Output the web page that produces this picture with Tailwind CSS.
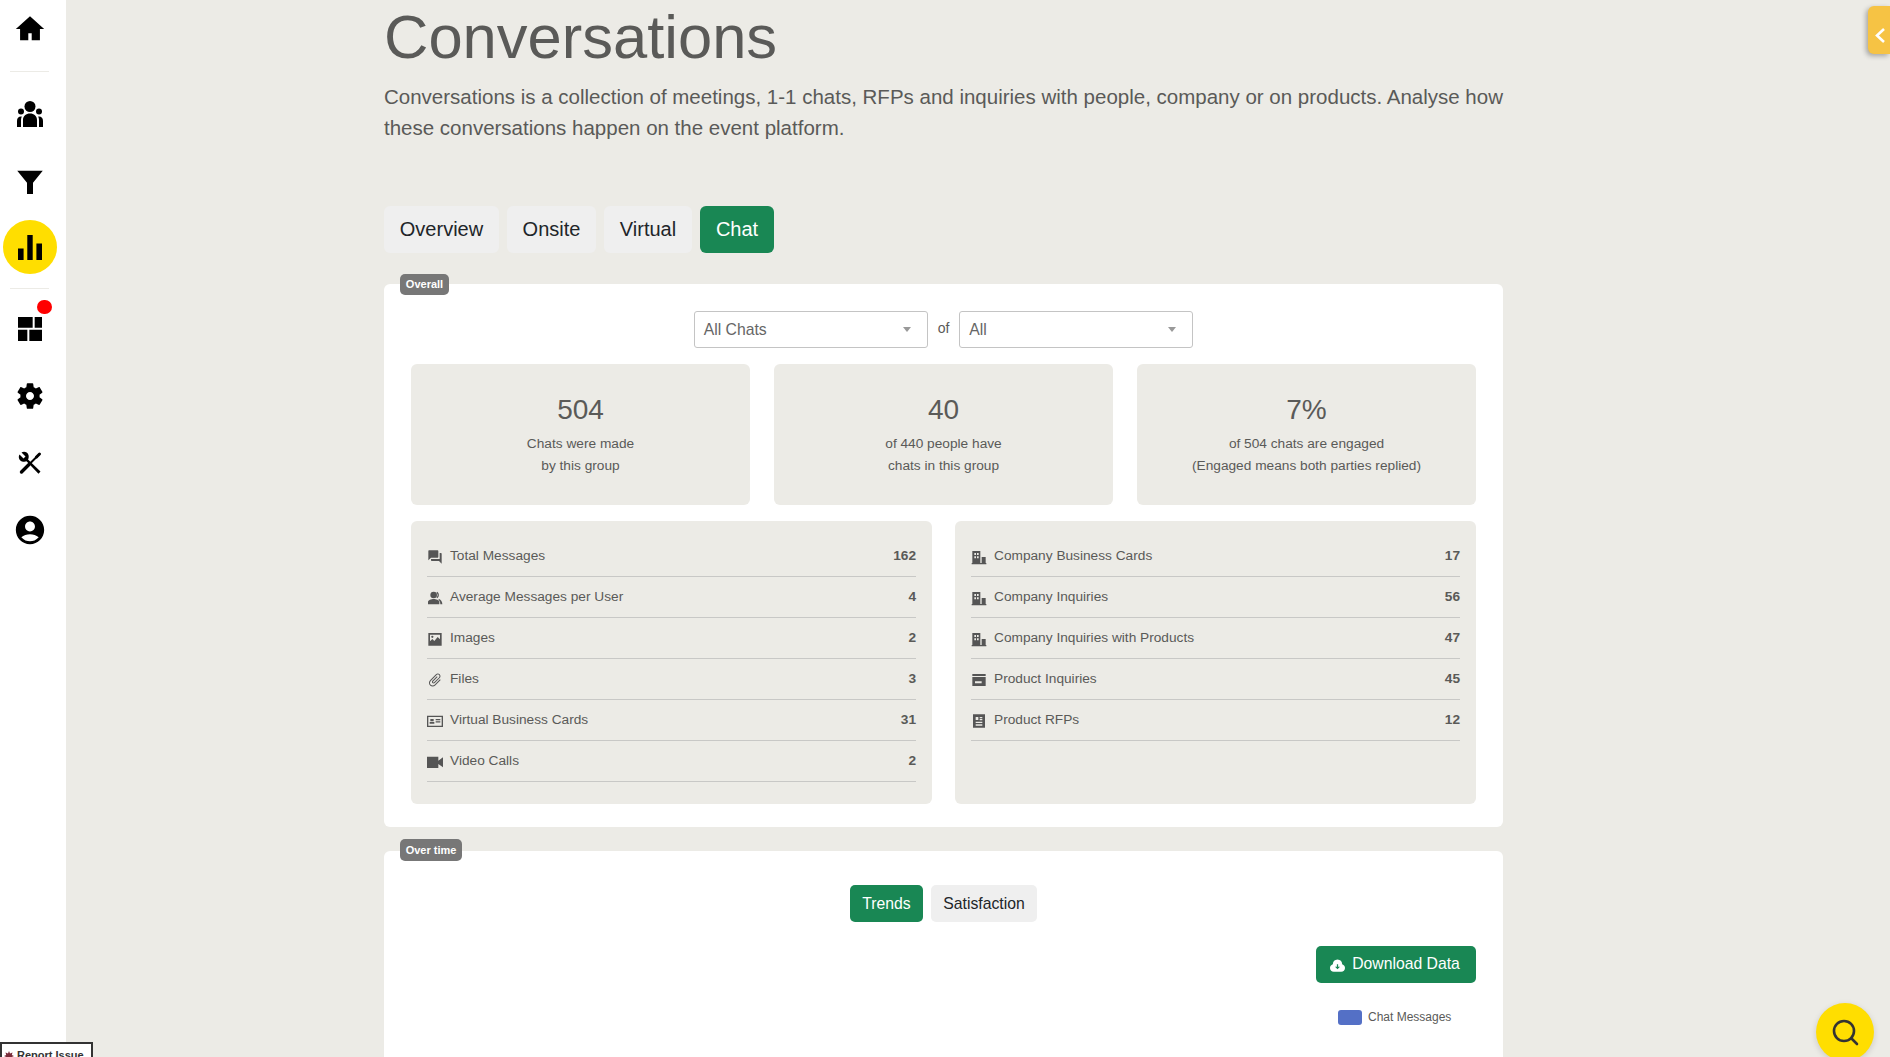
<!DOCTYPE html>
<html lang="en">
<head>
  <meta charset="UTF-8"/>
  <title>Conversations</title>
  <script src="https://cdn.jsdelivr.net/npm/@tailwindcss/browser@4"></script>
</head>
<body class="h-screen overflow-hidden bg-[#ecebe6] font-['Liberation_Sans',Arial,sans-serif] text-[#5a5a58]">
  <div class="relative flex h-[1057px] overflow-hidden">

    <!-- Sidebar -->
    <nav class="w-[66px] shrink-0 bg-white pr-[7px] flex flex-col items-center text-black">
      <div class="h-[72px] w-[39px] shrink-0 border-b border-[#ecebe6] pb-[13px] flex items-center justify-center">
        <svg viewBox="0 0 24 24" class="w-[34px] h-[34px]" fill="currentColor"><path d="M10.800 20v-5h2.400v5H19v-8h3L12 3 2 12h3v8z"/></svg>
      </div>
      <div class="h-[84px] shrink-0 flex items-center justify-center">
        <svg viewBox="0 0 28 28" class="w-[28px] h-[28px]" fill="currentColor"><circle cx="14" cy="6.500" r="5.500"/><circle cx="5" cy="11.500" r="3"/><circle cx="23" cy="11.500" r="3"/><path d="M7 27v-7c0-4 3-6.500 7-6.500s7 2.500 7 6.500v7zM1 27v-6c0-3 1.500-4.500 4-4.500.5 0 .8 0 .8.100-.5 1-.8 2.200-.8 3.400v7zM27 27v-6c0-3-1.500-4.500-4-4.500-.5 0-.8 0-.8.100.5 1 .8 2.200.8 3.400v7z"/></svg>
      </div>
      <div class="h-[52px] shrink-0 flex items-center justify-center">
        <svg viewBox="0 0 24 24" class="w-[36px] h-[36px]" fill="currentColor"><path d="M3.500 4.500h17L14 12.500v7.500h-4v-7.500z"/></svg>
      </div>
      <div class="w-[54px] h-[54px] shrink-0 mt-[12px] rounded-full bg-[#ffde00] flex items-center justify-center">
        <svg viewBox="0 0 24 25" class="w-[24px] h-[25px]" fill="currentColor"><path d="M0 13.600h5.600V25H0zM9.300 0h5.400v25H9.300zM18.400 8.600H24V25h-5.600z"/></svg>
      </div>
      <div class="w-[39px] shrink-0 mt-[14px] border-b border-[#ecebe6]"></div>
      <div class="relative h-[80px] w-full shrink-0 flex items-center justify-center">
        <svg viewBox="0 0 24 24" class="w-[32px] h-[32px]" fill="currentColor"><path d="M3 3h11v8H3zM15.500 3H21v8h-5.500zM3 12.500h7V21H3zM11.500 12.500H21V21h-9.500z"/></svg>
        <span class="absolute left-[37px] top-[11px] w-[15px] h-[14px] rounded-full bg-[#ff0000]"></span>
      </div>
      <div class="h-[54px] shrink-0 flex items-center justify-center">
        <svg viewBox="0 0 24 24" class="w-[32px] h-[32px]" fill="currentColor"><path fill-rule="evenodd" d="M19.140 12.940c.04-.3.06-.61.06-.94 0-.32-.02-.64-.07-.94l2.030-1.580c.18-.14.23-.41.12-.61l-1.920-3.320c-.12-.22-.37-.29-.59-.22l-2.390.96c-.5-.38-1.030-.7-1.620-.94l-.36-2.540c-.04-.24-.24-.41-.48-.41h-3.840c-.24 0-.43.17-.47.41l-.36 2.540c-.59.24-1.130.57-1.620.94l-2.390-.96c-.22-.08-.47 0-.59.22L2.740 8.870c-.12.21-.08.47.12.61l2.030 1.580c-.05.3-.09.63-.09.94s.02.64.07.94l-2.030 1.580c-.18.14-.23.41-.12.61l1.920 3.320c.12.22.37.29.59.22l2.390-.96c.5.38 1.030.7 1.620.94l.36 2.540c.05.24.24.41.48.41h3.840c.24 0 .44-.17.47-.41l.36-2.540c.59-.24 1.130-.56 1.620-.94l2.390.96c.22.08.47 0 .59-.22l1.920-3.320c.12-.22.07-.47-.12-.61l-2.010-1.580zM12 15c-1.650 0-3-1.350-3-3s1.350-3 3-3 3 1.350 3 3-1.350 3-3 3z"/></svg>
      </div>
      <div class="h-[80px] shrink-0 flex items-center justify-center">
        <svg viewBox="0 0 24 24" class="w-[24px] h-[24px]" fill="currentColor"><path d="M1.500 3.500 5.500 7.500 7.500 5.500 3.500 1.500C6 0 9.500 1 10.500 4c.5 2 0 3.500-.5 4.500L22.500 20.500 20.500 22.700 8.500 10.300C7.500 10.800 6 11 4 10.500 1 9.500 0 6 1.500 3.500z"/><path d="M3.500 21 11 13.500" stroke="currentColor" stroke-width="3.400" stroke-linecap="round"/><path d="M11 13.500 19 5.500" stroke="currentColor" stroke-width="2"/><path d="M18.500 6 21.500 3" stroke="currentColor" stroke-width="3" stroke-linecap="round"/></svg>
      </div>
      <div class="h-[54px] shrink-0 flex items-center justify-center">
        <svg viewBox="0 0 24 24" class="w-[34px] h-[34px]" fill="currentColor"><path d="M12 2C6.480 2 2 6.480 2 12s4.480 10 10 10 10-4.480 10-10S17.520 2 12 2zm0 4c1.930 0 3.500 1.570 3.500 3.500S13.930 13 12 13s-3.500-1.570-3.500-3.500S10.070 6 12 6zm0 14c-2.030 0-4.430-.82-6.140-2.880C7.550 15.800 9.680 15 12 15s4.450.8 6.140 2.120C16.430 19.180 14.030 20 12 20z"/></svg>
      </div>
    </nav>

    <!-- Main column -->
    <main class="flex-1 pl-[318px]">
      <div class="w-[1119px]">
        <h1 class="pt-[3px] text-[61.500px] leading-[67px] font-normal">Conversations</h1>
        <p class="mt-[11px] text-[20.500px] leading-[31px] whitespace-nowrap">Conversations is a collection of meetings, 1-1 chats, RFPs and inquiries with people, company or on products. Analyse how<br/>these conversations happen on the event platform.</p>

        <div class="mt-[63px] flex gap-[8px] text-[20px] text-[#212529]">
          <a class="h-[47px] w-[115px] pb-[2px] rounded-[6px] bg-[#efefef] flex items-center justify-center">Overview</a>
          <a class="h-[47px] w-[89px] pb-[2px] rounded-[6px] bg-[#efefef] flex items-center justify-center">Onsite</a>
          <a class="h-[47px] w-[88px] pb-[2px] rounded-[6px] bg-[#efefef] flex items-center justify-center">Virtual</a>
          <a class="h-[47px] w-[74px] pb-[2px] rounded-[6px] bg-[#198754] text-white flex items-center justify-center">Chat</a>
        </div>

        <!-- Overall -->
        <section class="relative mt-[31px] h-[543px] rounded-[6px] bg-white px-[27px] pt-[27px]">
          <span class="absolute left-[16px] -top-[10px] h-[21px] w-[49px] rounded-[5px] bg-[#777777] text-white text-[11px] font-bold flex items-center justify-center">Overall</span>

          <div class="flex justify-center items-center gap-[10px]">
            <div class="w-[234px] h-[37px] pt-[1px] rounded-[3px] border border-[#c4c4c4] bg-white px-[9px] flex items-center justify-between text-[15.750px] text-[#666666]">
              <span>All Chats</span>
              <svg viewBox="0 0 8 5" class="w-[8px] h-[5px] mr-[7px] -mt-[2px]" fill="#999999"><path d="M0 0h8L4 5z"/></svg>
            </div>
            <span class="text-[14px] -mt-[3px]">of</span>
            <div class="w-[234px] h-[37px] pt-[1px] rounded-[3px] border border-[#c4c4c4] bg-white px-[9px] flex items-center justify-between text-[15.750px] text-[#666666]">
              <span>All</span>
              <svg viewBox="0 0 8 5" class="w-[8px] h-[5px] mr-[7px] -mt-[2px]" fill="#999999"><path d="M0 0h8L4 5z"/></svg>
            </div>
          </div>

          <div class="mt-[16px] grid grid-cols-3 gap-[24px] text-center">
            <div class="h-[141px] rounded-[6px] bg-[#ecebe6] pt-[25px]">
              <div class="text-[28px] leading-[42px]">504</div>
              <div class="mt-[2px] text-[13.700px] leading-[21.500px]">Chats were made<br/>by this group</div>
            </div>
            <div class="h-[141px] rounded-[6px] bg-[#ecebe6] pt-[25px]">
              <div class="text-[28px] leading-[42px]">40</div>
              <div class="mt-[2px] text-[13.700px] leading-[21.500px]">of 440 people have<br/>chats in this group</div>
            </div>
            <div class="h-[141px] rounded-[6px] bg-[#ecebe6] pt-[25px]">
              <div class="text-[28px] leading-[42px]">7%</div>
              <div class="mt-[2px] text-[13.700px] leading-[21.500px]">of 504 chats are engaged<br/>(Engaged means both parties replied)</div>
            </div>
          </div>

          <div class="mt-[16px] grid grid-cols-2 gap-[23px] text-[13.700px]">
            <div class="h-[283px] rounded-[6px] bg-[#ecebe6] px-[16px] pt-[15px]">
              <div class="h-[41px] border-b border-[#c8c8c6] flex items-center">
                <svg viewBox="0 0 24 24" class="w-[16px] h-[16px] mt-[2px]" fill="#555555"><path d="M21 6h-2v9H6v2c0 .55.45 1 1 1h11l4 4V7c0-.55-.45-1-1-1zm-4 6V3c0-.55-.45-1-1-1H3c-.55 0-1 .45-1 1v14l4-4h10c.55 0 1-.45 1-1z"/></svg>
                <span class="ml-[7px]">Total Messages</span><b class="ml-auto">162</b>
              </div>
              <div class="h-[41px] border-b border-[#c8c8c6] flex items-center">
                <svg viewBox="0 0 24 24" class="w-[16px] h-[16px] mt-[2px]" fill="#555555"><path d="M10 12.500a5 5 0 1 0 0-10 5 5 0 0 0 0 10zM10 13.500c-3.500 0-8.500 1.700-8.500 4.500v3.500h17V18c0-2.800-5-4.500-8.500-4.500zM15.500 2.500l-1.200 1.500a5 5 0 0 1 0 7l1.200 1.500a6.500 6.500 0 0 0 0-10zM18 13.500l-1 1.500c1.800 1 3 2.800 3 6.500h3c0-4-2-6.800-5-8z"/></svg>
                <span class="ml-[7px]">Average Messages per User</span><b class="ml-auto">4</b>
              </div>
              <div class="h-[41px] border-b border-[#c8c8c6] flex items-center">
                <svg viewBox="0 0 24 24" class="w-[16px] h-[16px] mt-[2px]" fill="#555555"><path fill-rule="evenodd" d="M2 3h20v19H2zM4.500 5.500v10l3.500-3.500 3 3 5-6 3.500 3.500v-7zM8 7a1.700 1.700 0 1 0 0 3.400A1.700 1.700 0 0 0 8 7z"/></svg>
                <span class="ml-[7px]">Images</span><b class="ml-auto">2</b>
              </div>
              <div class="h-[41px] border-b border-[#c8c8c6] flex items-center">
                <svg viewBox="0 0 24 24" class="w-[16px] h-[16px] mt-[2px] rotate-45" fill="#555555"><path d="M16.500 6v11.500c0 2.210-1.790 4-4 4s-4-1.790-4-4V5c0-1.380 1.120-2.500 2.500-2.500s2.500 1.120 2.500 2.500v10.500c0 .55-.45 1-1 1s-1-.45-1-1V6H10v9.500c0 1.380 1.120 2.500 2.500 2.500s2.500-1.120 2.500-2.500V5c0-2.210-1.790-4-4-4S7 2.790 7 5v12.500c0 3.040 2.460 5.500 5.500 5.500s5.500-2.460 5.500-5.500V6h-1.500z"/></svg>
                <span class="ml-[7px]">Files</span><b class="ml-auto">3</b>
              </div>
              <div class="h-[41px] border-b border-[#c8c8c6] flex items-center">
                <svg viewBox="0 0 24 24" class="w-[16px] h-[16px] mt-[2px]" fill="#555555"><path fill-rule="evenodd" d="M0 4h24v17H0zM2 6v13h20V6zM5 9h5v3.500H5zM4 13.500h7V16H4zM13 9h7v1.800h-7zM13 12.500h7v1.800h-7z"/></svg>
                <span class="ml-[7px]">Virtual Business Cards</span><b class="ml-auto">31</b>
              </div>
              <div class="h-[41px] border-b border-[#c8c8c6] flex items-center">
                <svg viewBox="0 0 24 24" class="w-[16px] h-[16px] mt-[2px]" fill="#555555"><path d="M17 10V4H0v17h17v-6l7 5V5z"/></svg>
                <span class="ml-[7px]">Video Calls</span><b class="ml-auto">2</b>
              </div>
            </div>

            <div class="h-[283px] rounded-[6px] bg-[#ecebe6] px-[16px] pt-[15px]">
              <div class="h-[41px] border-b border-[#c8c8c6] flex items-center">
                <svg viewBox="0 0 24 24" class="w-[16px] h-[16px] mt-[2px]" fill="#555555"><path fill-rule="evenodd" d="M2 21V3h12v18h2v-9h6v9h1v2H1v-2zM5 6v3h2.500V6zM9 6v3h2.500V6zM5 11v3h2.500v-3zM9 11v3h2.500v-3z"/></svg>
                <span class="ml-[7px]">Company Business Cards</span><b class="ml-auto">17</b>
              </div>
              <div class="h-[41px] border-b border-[#c8c8c6] flex items-center">
                <svg viewBox="0 0 24 24" class="w-[16px] h-[16px] mt-[2px]" fill="#555555"><path fill-rule="evenodd" d="M2 21V3h12v18h2v-9h6v9h1v2H1v-2zM5 6v3h2.500V6zM9 6v3h2.500V6zM5 11v3h2.500v-3zM9 11v3h2.500v-3z"/></svg>
                <span class="ml-[7px]">Company Inquiries</span><b class="ml-auto">56</b>
              </div>
              <div class="h-[41px] border-b border-[#c8c8c6] flex items-center">
                <svg viewBox="0 0 24 24" class="w-[16px] h-[16px] mt-[2px]" fill="#555555"><path fill-rule="evenodd" d="M2 21V3h12v18h2v-9h6v9h1v2H1v-2zM5 6v3h2.500V6zM9 6v3h2.500V6zM5 11v3h2.500v-3zM9 11v3h2.500v-3z"/></svg>
                <span class="ml-[7px]">Company Inquiries with Products</span><b class="ml-auto">47</b>
              </div>
              <div class="h-[41px] border-b border-[#c8c8c6] flex items-center">
                <svg viewBox="0 0 24 24" class="w-[16px] h-[16px] mt-[2px]" fill="#555555"><path fill-rule="evenodd" d="M2 3h20v3h-20zM2 7.500h20V21H2zM6 14v3h10v-3z"/></svg>
                <span class="ml-[7px]">Product Inquiries</span><b class="ml-auto">45</b>
              </div>
              <div class="h-[41px] border-b border-[#c8c8c6] flex items-center">
                <svg viewBox="0 0 24 24" class="w-[16px] h-[16px] mt-[2px]" fill="#555555"><path fill-rule="evenodd" d="M3 2h18v20H3zM7 6v4.500h4V6zM13 6v1.800h4V6zM13 9v1.800h4V9zM7 13v2h10v-2zM7 17v2h10v-2z"/></svg>
                <span class="ml-[7px]">Product RFPs</span><b class="ml-auto">12</b>
              </div>
            </div>
          </div>
        </section>

        <!-- Over time -->
        <section class="relative mt-[24px] h-[400px] rounded-[6px] bg-white px-[27px] pt-[34px]">
          <span class="absolute left-[16px] -top-[12px] h-[22px] w-[62px] rounded-[5px] bg-[#777777] text-white text-[11px] font-bold flex items-center justify-center">Over time</span>
          <div class="flex justify-center gap-[8px] text-[15.750px] text-[#212529]">
            <a class="h-[37px] w-[73px] rounded-[5px] bg-[#198754] text-white flex items-center justify-center">Trends</a>
            <a class="h-[37px] w-[106px] rounded-[5px] bg-[#efefef] flex items-center justify-center">Satisfaction</a>
          </div>
          <div class="mt-[24px] flex justify-end">
            <a class="h-[37px] w-[160px] pb-[2px] pr-[2px] rounded-[5px] bg-[#198754] text-white text-[15.750px] flex items-center justify-center gap-[7px]">
              <svg viewBox="0 0 24 24" class="w-[15px] h-[15px] mt-[4px]"><path fill="#ffffff" d="M12 2.500a8 8 0 0 0-7.500 7.500C1.500 11 0 13.500 0 16c0 3.300 2.700 6 6 6h12c3.300 0 6-2.700 6-6 0-2.500-1.500-5-4.500-6A8 8 0 0 0 12 2.500z"/><path fill="#198754" d="M11 10h2v4h3l-4 4-4-4h3z"/></svg>
              Download Data
            </a>
          </div>
          <div class="mt-[26px] flex items-center pl-[927px] text-[12px]">
            <span class="w-[24px] h-[15px] rounded-[3px] bg-[#5470c6]"></span>
            <span class="ml-[6px] -mt-[1px]">Chat Messages</span>
          </div>
        </section>
      </div>
    </main>

    <!-- Overlays -->
    <button class="absolute right-0 top-[6px] w-[22px] h-[48px] rounded-l-[6px] bg-[#f6c344] shadow-[-2px_2px_5px_rgba(0,0,0,0.3)] flex items-center justify-center">
      <svg viewBox="0 0 12 17" class="w-[12px] h-[17px] mt-[11px] ml-[1px]" fill="none" stroke="#ffffff" stroke-width="2.600"><path d="M10 2 3 8.500l7 6.500"/></svg>
    </button>
    <button class="absolute left-[1816px] top-[1003px] w-[58px] h-[58px] rounded-full bg-[#ffde00] shadow-[0_2px_6px_rgba(0,0,0,0.15)] flex items-center justify-center">
      <svg viewBox="0 0 28 28" class="w-[28px] h-[28px]" fill="none" stroke="#333333" stroke-width="2.600" stroke-linecap="round"><circle cx="13" cy="13" r="10"/><path d="M20.500 20.500 26 26"/></svg>
    </button>
    <div class="absolute left-0 top-[1042px] w-[93px] h-[30px] border-2 border-[#333333] bg-white pl-[2px] pt-[5px] text-[11px] font-bold text-[#333333] flex items-start gap-[3px]">
      <svg viewBox="0 0 10 10" class="w-[10px] h-[10px] mt-[2px]" fill="#7a2b3a"><path d="M5 0 6 2.500 8.500 1.500 7.800 4 10 5 7.800 6 8.500 8.500 6 7.500 5 10 4 7.500 1.500 8.500 2.200 6 0 5 2.200 4 1.500 1.500 4 2.500z"/></svg>
      <span class="leading-[13px]">Report Issue</span>
    </div>
  </div>
</body>
</html>
